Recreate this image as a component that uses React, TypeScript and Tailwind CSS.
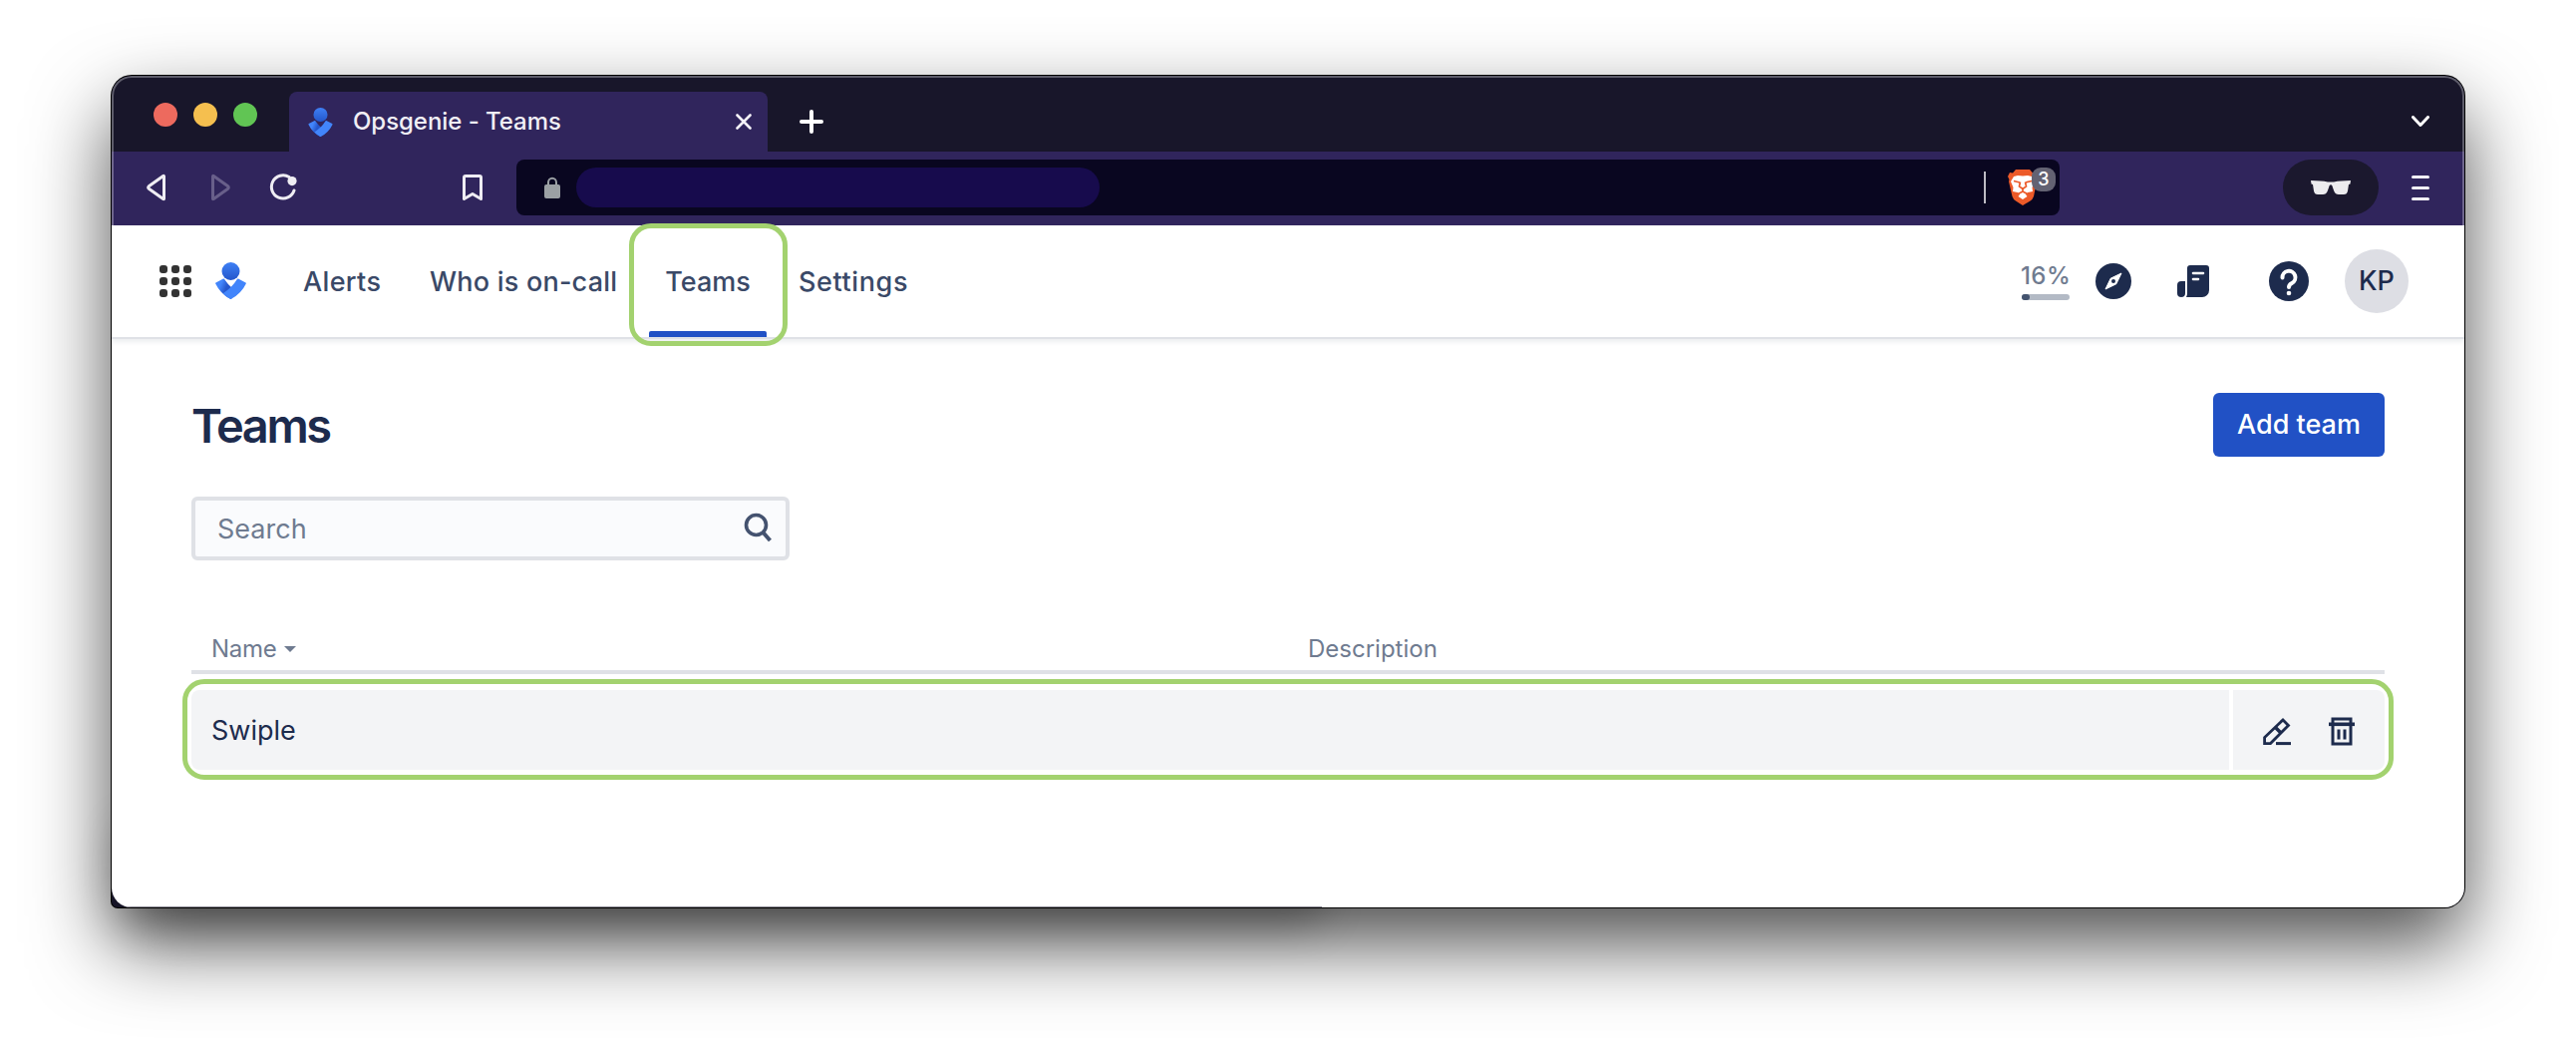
import React from "react";

function OpsLogo({ w, h, id }: { w: number; h: number; id: string }) {
  return (
    <svg width={w} height={h} viewBox="0 0 31 37" className="block shrink-0">
      <defs>
        <linearGradient id={id + "a"} x1="0" y1="0" x2="0" y2="1">
          <stop offset="0" stopColor="#3f80f5" />
          <stop offset="1" stopColor="#2456cb" />
        </linearGradient>
        <linearGradient id={id + "b"} x1="0.2" y1="0.3" x2="0.75" y2="0.6">
          <stop offset="0.15" stopColor="#4285fb" />
          <stop offset="0.75" stopColor="#2557cd" />
        </linearGradient>
      </defs>
      <circle cx="15.5" cy="9" r="9" fill={"url(#" + id + "a)"} />
      <path d="M0.5 20.5 L8 16.6 Q9 16.4 9.5 17.4 Q12.500 22 16.500 25.500 L16.4 36.6 Q15.5 37.2 14.6 36.6 Q5 31.5 0.2 21.6 Q0 20.8 0.5 20.5Z" fill={"url(#" + id + "b)"} />
      <path d="M30.5 20.5 L23 16.6 Q22 16.4 21.5 17.4 Q17 25 7.600 31.200 Q11.4 35 14.6 36.6 Q15.5 37.2 16.4 36.6 Q26 31.5 30.8 21.6 Q31 20.8 30.5 20.5Z" fill="#4285fb" />
    </svg>
  );
}

function TabStrip() {
  return (
    <div className="flex h-[76px] items-end bg-[#18162a]">
      <div className="flex h-[76px] w-[178px] items-center gap-4 pl-[42px] pt-[2px]">
        <span className="size-6 rounded-full bg-[#ed6a5e]" />
        <span className="size-6 rounded-full bg-[#f5bf4f]" />
        <span className="size-6 rounded-full bg-[#61c554]" />
      </div>
      <div className="flex h-[60px] w-[480px] items-center rounded-t-[8px] bg-[#30255c] pl-[19px] pr-4">
        <OpsLogo w={25} h={29} id="t" />
        <span className="ml-[20px] whitespace-nowrap text-[24px] font-medium leading-[30px] tracking-[-0.050px] text-[#f1eff5]">Opsgenie - Teams</span>
        <svg className="ml-auto" width="16" height="16" viewBox="0 0 16 16" fill="none" stroke="#f4f2f8" strokeWidth="2.6" strokeLinecap="round">
          <path d="M1.5 1.5l13 13M14.5 1.5l-13 13" />
        </svg>
      </div>
      <div className="flex h-[60px] flex-1 items-center pl-8 pr-[35px]">
        <svg width="24" height="24" viewBox="0 0 24 24" fill="none" stroke="#fff" strokeWidth="4" strokeLinecap="round">
          <path d="M12 2v20M2 12h20" />
        </svg>
        <svg className="ml-auto" width="18" height="12" viewBox="0 0 18 12" fill="none" stroke="#fff" strokeWidth="3" strokeLinecap="round" strokeLinejoin="round">
          <path d="M1.5 1.5L9 9.5l7.500-8" />
        </svg>
      </div>
    </div>
  );
}

function Toolbar() {
  return (
    <div className="flex h-[74px] items-center bg-[#30255c] pb-[2px]">
      <svg className="ml-[35px]" width="20" height="28" viewBox="0 0 20 28" fill="none" stroke="#efedf3" strokeWidth="3" strokeLinejoin="round">
        <path d="M17.500 2.800v22.400q0 .8-.8.3L2.300 15.200q-1.200-1.200 0-2.400L16.700 2.500q.8-.5.8.3z" />
      </svg>
      <svg className="ml-[44px]" width="20" height="28" viewBox="0 0 20 28" fill="none" stroke="#685f8a" strokeWidth="3" strokeLinejoin="round">
        <path d="M2.500 2.800v22.400q0 .8.8.3L17.700 15.200q1.200-1.200 0-2.400L3.300 2.500q-.8-.5-.8.3z" />
      </svg>
      <svg className="ml-[39px]" width="28" height="28" viewBox="0 0 28 28" fill="none">
        <path d="M20 3.500A11.600 11.600 0 1 0 25 17" stroke="#efedf3" strokeWidth="3" strokeLinecap="round" />
        <circle cx="23" cy="7.600" r="4.600" fill="#efedf3" />
      </svg>
      <svg className="ml-[166px]" width="20" height="28" viewBox="0 0 20 28" fill="none" stroke="#efedf3" strokeWidth="3" strokeLinejoin="round">
        <path d="M1.500 4q0-1.500 1.500-1.500h14q1.500 0 1.500 1.500v21.500L10 20.500 1.500 25.500z" />
      </svg>
      <div className="ml-[34px] flex h-[56px] w-[1548px] items-center rounded-[8px] bg-[#090620] pl-7 pr-1">
        <svg width="16" height="22" viewBox="0 0 16 22">
          <path d="M4 9V6a4 4.200 0 0 1 8 0v3" fill="none" stroke="#9ba0a4" strokeWidth="2" />
          <rect x="0" y="8" width="16" height="14" rx="2" fill="#9ba0a4" />
        </svg>
        <div className="ml-4 h-10 w-[525px] rounded-full bg-[#170b4d]" />
        <div className="ml-auto h-8 w-[2px] bg-[#bdbbc4]" />
        <div className="relative ml-[22px] mr-[18px]">
          <svg width="30" height="36" viewBox="0 0 30 36" className="block">
            <path d="M8 0h14l3 3.500 3-.5 2 4-1.500 3 .5 2-3 15q-1 3-3.500 4.500L15 36 8 31.500Q5.500 30 4.500 27L1 12l.5-2L0 7l2-4 3 .5z" fill="#ec5a29" />
            <path d="M15 6.500l5-.5 4 1 3 5-2.500 6 .5 4-5 1-2 2 1.500 2L15 30l-4.500-3 1.500-2-2-2-5-1 .5-4L3 12l3-5 4-1z" fill="#fff" />
            <path d="M6 11.500l6 1.500M24 11.500l-6 1.500M12.500 12.500L11.500 17l3.500 2.500 3.500-2.500-1-4.500M15 19.500v2.500M9.500 25l5.500-3 5.500 3" fill="none" stroke="#ec5a29" strokeWidth="1.700" />
          </svg>
          <div className="absolute left-6 top-[-2px] flex size-6 items-center justify-center rounded-[9px] bg-[#636272] text-[18px] font-medium leading-none text-white">3</div>
        </div>
      </div>
      <div className="ml-[224px] flex h-[56px] w-24 items-center justify-center rounded-full bg-[#1b182e]">
        <svg width="40" height="14" viewBox="0 0 40 14" fill="#ecebee">
          <path d="M0 0Q10 0 17 1.500h6Q30 0 40 0L39.500 3.500 38 4l-1 6.500Q36.300 14 33 14h-5q-3.500 0-4.800-3.500L21.300 5Q20 3.600 18.700 5l-1.900 5.500Q15.500 14 12 14H7Q3.700 14 3 10.500L2 4 .5 3.500z" />
        </svg>
      </div>
      <div className="ml-[33px] flex flex-col gap-2">
        <span className="h-[3px] w-[18px] rounded-full bg-[#f1eff5]" />
        <span className="h-[3px] w-[18px] rounded-full bg-[#f1eff5]" />
        <span className="h-[3px] w-[18px] rounded-full bg-[#f1eff5]" />
      </div>
    </div>
  );
}

function AppHeader() {
  return (
    <div className="relative z-10 flex h-[112px] items-center bg-white text-[27px] font-medium text-[#3a4967] shadow-[0_2px_0_#dfe1e6,0_5px_5px_#eceef0]">
      <div className="ml-12 grid grid-cols-3 gap-1">
        {Array.from({ length: 9 }, (_, i) => (
          <span key={i} className="size-2 rounded-[3px] bg-[#333]" />
        ))}
      </div>
      <div className="ml-6 mt-[-2px]">
        <OpsLogo w={31} h={37} id="h" />
      </div>
      <span className="ml-[57px] w-[127px] pt-[2px] tracking-[0.35px]">Alerts</span>
      <span className="w-[220px] whitespace-nowrap pt-[2px] tracking-[0.22px]">Who is on-call</span>
      <div className="relative flex h-[112px] w-[118px] items-center justify-center pt-[2px]">
        Teams
        <div className="absolute bottom-0 left-0 h-[6px] w-[118px] rounded-t-[2px] bg-[#2151c5]" />
        <div className="absolute left-[-20px] top-[-2px] h-[123px] w-[159px] rounded-[22px] border-[5px] border-[#a3d26f]" />
      </div>
      <span className="ml-[32px] pt-[2px] tracking-[0.6px]">Settings</span>
      <div className="ml-auto w-12">
        <div className="-ml-px whitespace-nowrap pt-px text-[24px] leading-[26px] tracking-[0.4px] text-[#6f7b90]">16%</div>
        <div className="mt-[5px] h-[6px] w-12 rounded-full bg-[#b3bac5]">
          <div className="h-[6px] w-2 rounded-full bg-[#44546f]" />
        </div>
      </div>
      <svg className="ml-[26px]" width="36" height="36" viewBox="0 0 36 36">
        <circle cx="18" cy="18" r="18" fill="#1d2b4d" />
        <path d="M26 10L20.800 20.800 10 26l5.200-10.800z" fill="#fff" stroke="#fff" strokeLinejoin="round" />
        <circle cx="18" cy="18" r="2" fill="#1d2b4d" />
      </svg>
      <svg className="ml-[46px]" width="32" height="32" viewBox="0 0 32 32">
        <path d="M10 3a3 3 0 0 1 3-3h16a3 3 0 0 1 3 3v22a7 7 0 0 1-7 7H9q1-1.500 1-4z" fill="#1d2b4d" />
        <path d="M0 20a4 4 0 0 1 4-4h4v12q0 4-4 4t-4-4z" fill="#1d2b4d" />
        <path d="M16 8h10M16 14h5" stroke="#fff" strokeWidth="2.600" strokeLinecap="round" />
      </svg>
      <svg className="ml-[60px]" width="40" height="40" viewBox="0 0 40 40" fill="none">
        <circle cx="20" cy="20" r="20" fill="#1d2b4d" />
        <path d="M13.500 16.500a6.500 6.500 0 1 1 9.500 5.500q-3 1.500-3 4" stroke="#fff" strokeWidth="4" strokeLinecap="round" />
        <circle cx="20" cy="32" r="2.300" fill="#fff" />
      </svg>
      <div className="ml-9 mr-14 flex size-16 items-center justify-center rounded-full bg-[#dddee4] pt-px text-[27px] font-medium text-[#1d2b4d]">KP</div>
    </div>
  );
}

function TeamsPage() {
  return (
    <div className="flex-1 bg-white px-20 pt-14">
      <div className="flex items-center justify-between">
        <h1 className="pt-[2px] text-[47px] font-semibold leading-[62px] tracking-[-2.400px] text-[#1d2b4d]">Teams</h1>
        <button className="h-16 w-[172px] rounded-[6px] bg-[#2151c5] pt-px text-[27px] font-medium text-white">Add team</button>
      </div>
      <div className="mt-10 flex h-16 w-[600px] items-center justify-between rounded-[6px] border-4 border-[#dfe1e6] bg-[#fafbfd] pl-[22px] pr-[14px]">
        <span className="pt-[2px] text-[27px] text-[#6f7b90]">Search</span>
        <svg className="-mt-[2px]" width="28" height="30" viewBox="0 0 28 30" fill="none" stroke="#44526f" strokeWidth="3.600">
          <circle cx="12.500" cy="12.500" r="10" />
          <path d="M19.500 20l7 8" strokeWidth="4" />
        </svg>
      </div>
      <div className="mt-[74px] flex h-10 items-start border-b-4 border-[#dfe1e6] pl-[20px] text-[24px] leading-[30px] text-[#6f7b90]">
        <div className="flex w-[1100px] items-center tracking-[-0.3px]">
          Name
          <svg className="ml-2 -mt-px" width="12" height="6" viewBox="0 0 12 6" fill="#6f7b90">
            <path d="M0 0h12L6 6z" />
          </svg>
        </div>
        <span>Description</span>
      </div>
      <div className="relative mt-4 flex h-20 gap-1">
        <div className="flex flex-1 items-center rounded-l-[8px] bg-[#f3f4f6] pl-[20px] pt-[2px] text-[27px] text-[#1d2b4d]">Swiple</div>
        <div className="flex w-[152px] items-center rounded-r-[8px] bg-[#f3f4f6] pl-[30px] pt-[3px]">
          <svg width="28" height="28" viewBox="0 0 28 28" fill="none" stroke="#1d2b4d" strokeWidth="2.800">
            <path d="M1.600 25.600V19.500L20 2l5.500 5.500L7.500 25.600z" />
            <path d="M12.500 9.500l6 6" strokeWidth="3.600" />
            <path d="M13 25.600h15" strokeWidth="3" />
          </svg>
          <svg className="ml-[38px]" width="26" height="30" viewBox="0 0 26 30" fill="none" stroke="#1d2b4d" strokeWidth="3">
            <path d="M4 8V2h18v6" />
            <path d="M0 7.300h26" strokeWidth="3.600" />
            <path d="M4 8v19h18V8M10 12.500v10M16 12.500v10" />
          </svg>
        </div>
        <div className="absolute -left-[9px] -top-[11px] h-[101px] w-[2218px] rounded-[22px] border-[5px] border-[#a3d26f]" />
      </div>
    </div>
  );
}

export default function App() {
  return (
    <div className="h-[1058px] w-[2584px] overflow-hidden bg-white pl-[112px] pt-[76px] font-['Inter',sans-serif]">
      <div className="relative isolate h-[834px] w-[2360px] rounded-[20px] rounded-bl-[6px] bg-[#18162a] shadow-[0_0_0_1px_#000,0_36px_80px_rgba(0,0,0,0.7)]">
        <div className="absolute bottom-0 left-[10px] -z-10 h-[100px] w-[1204px] rounded-[20px] shadow-[0_16px_40px_rgba(0,0,0,0.25)]" />
        <div className="relative flex h-[834px] w-[2360px] flex-col overflow-hidden rounded-[20px]">
          <TabStrip />
          <Toolbar />
          <AppHeader />
          <TeamsPage />
          <div className="absolute bottom-0 left-0 h-px w-[1214px] bg-[#8c8a94]" />
          <div className="pointer-events-none absolute left-0 top-0 h-[150px] w-[2360px] rounded-t-[20px] border-x-2 border-t-2 border-white/30" />
        </div>
      </div>
    </div>
  );
}
